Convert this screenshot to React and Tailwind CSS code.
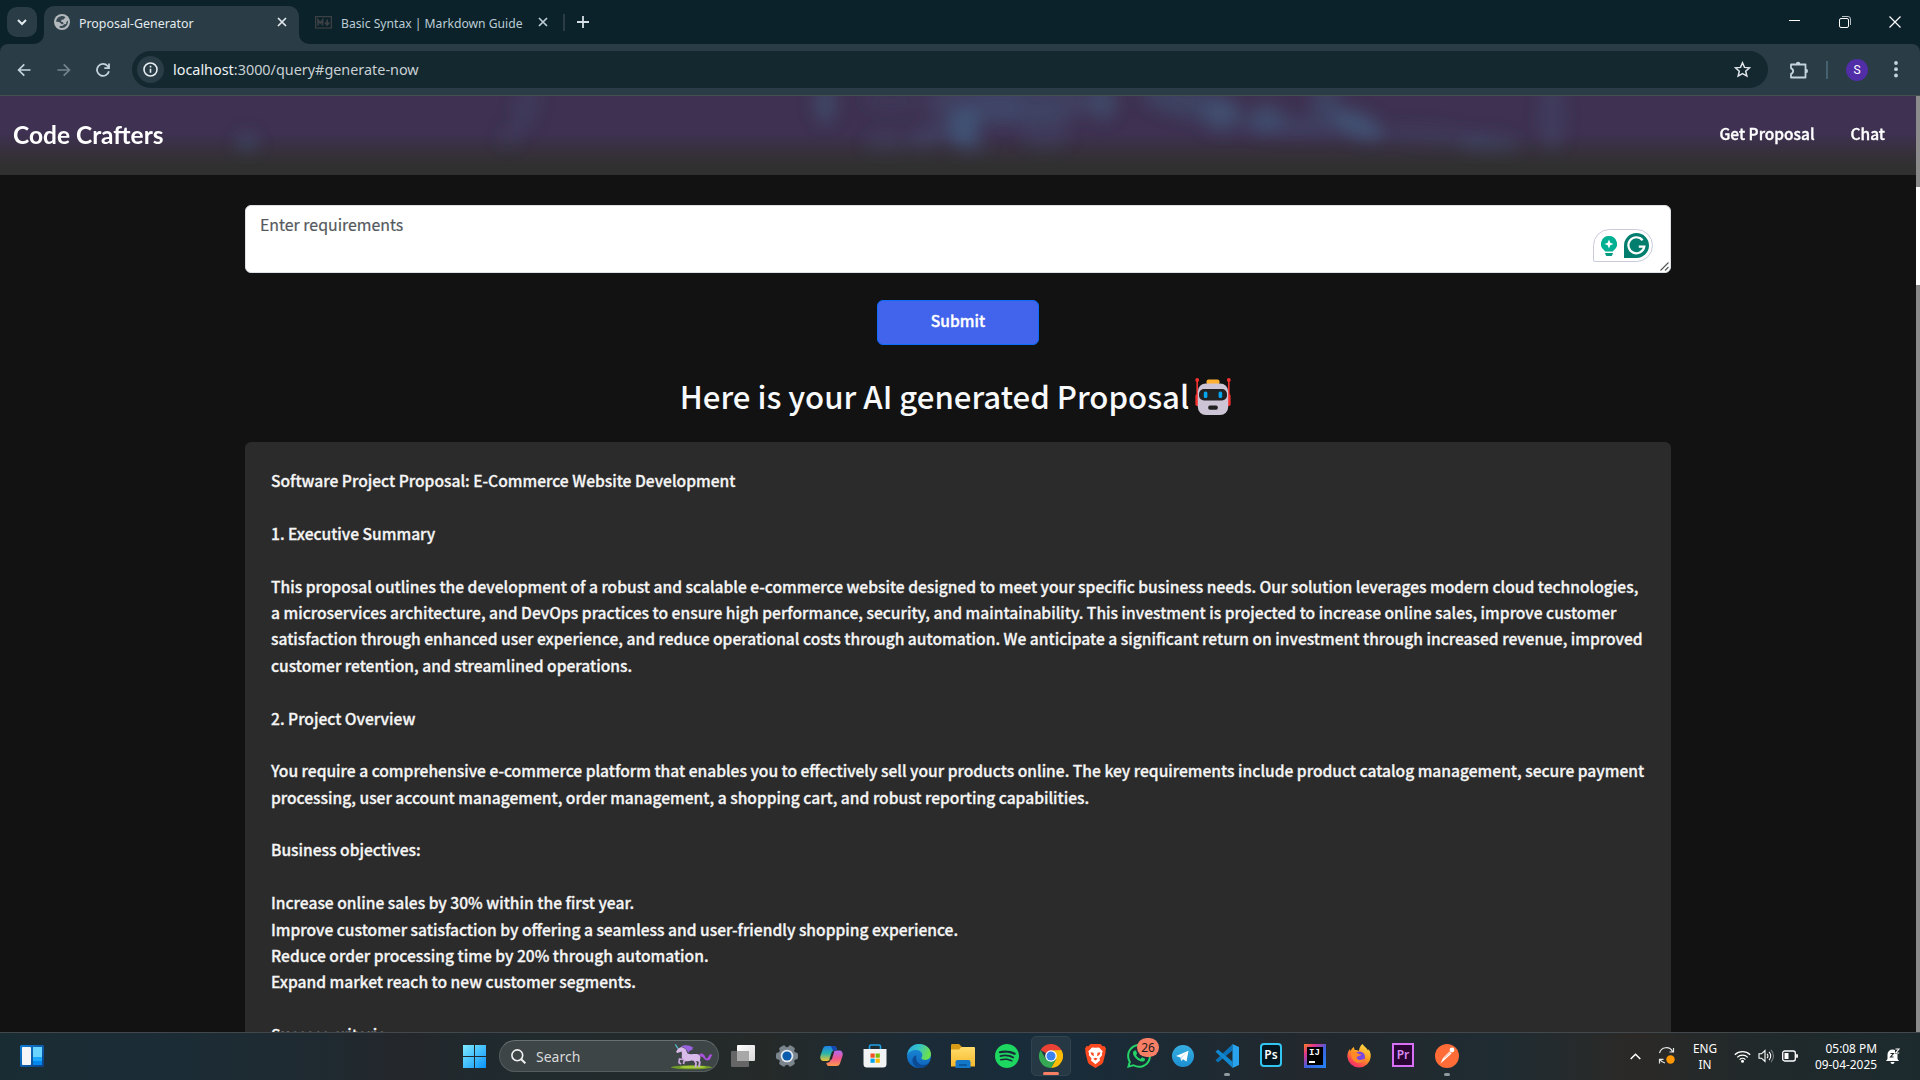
import React from "react";
import { SiSpotify, SiWhatsapp } from "react-icons/si";

const LINES = [
  "Software Project Proposal: E-Commerce Website Development",
  "",
  "1. Executive Summary",
  "",
  "This proposal outlines the development of a robust and scalable e-commerce website designed to meet your specific business needs. Our solution leverages modern cloud technologies,",
  "a microservices architecture, and DevOps practices to ensure high performance, security, and maintainability. This investment is projected to increase online sales, improve customer",
  "satisfaction through enhanced user experience, and reduce operational costs through automation. We anticipate a significant return on investment through increased revenue, improved",
  "customer retention, and streamlined operations.",
  "",
  "2. Project Overview",
  "",
  "You require a comprehensive e-commerce platform that enables you to effectively sell your products online. The key requirements include product catalog management, secure payment",
  "processing, user account management, order management, a shopping cart, and robust reporting capabilities.",
  "",
  "Business objectives:",
  "",
  "Increase online sales by 30% within the first year.",
  "Improve customer satisfaction by offering a seamless and user-friendly shopping experience.",
  "Reduce order processing time by 20% through automation.",
  "Expand market reach to new customer segments.",
  "",
  "Success criteria:",
];

function CloseX({ className }) {
  return (
    <svg viewBox="0 0 10 10" className={className} fill="none" stroke="currentColor" strokeWidth="1.7">
      <path d="M1 1l8 8M9 1L1 9" />
    </svg>
  );
}

function TabStrip() {
  return (
    <div className="flex h-11 items-start bg-[#0b222a] text-[12.4px] text-[#e3eaee]">
      <div className="ml-[7px] mt-[7px] flex h-[30px] w-[30px] items-center justify-center rounded-[10px] bg-[#2a3d46]">
        <svg width="10" height="7" viewBox="0 0 10 7" fill="none" stroke="currentColor" strokeWidth="2">
          <path d="M1 1l4 4 4-4" />
        </svg>
      </div>
      <svg className="mt-[34px] ml-[-3px] text-[#2a3d46]" width="10" height="10" viewBox="0 0 10 10">
        <path d="M10 0v10H0A10 10 0 0 0 10 0z" fill="currentColor" />
      </svg>
      <div className="mt-[6px] flex h-[38px] w-[255px] items-center rounded-t-[10px] bg-[#2a3d46] pb-[6px] pl-[10px]">
        <svg width="16" height="16" viewBox="0 0 16 16">
          <circle cx="8" cy="8" r="8" fill="#b3b9bd" />
          <path d="M7 2.200c1.600-.4 3.200 0 4.400 1L9.600 5.400 7.600 5.800 7 7.600l2 .6.600 1.800-1.800.2L5.600 8.200 2 7.500C2.200 4.800 4.400 2.600 7 2.200zM13.800 6.500c.5 2.500-.4 5.200-3 6.700-1.700 1-3.800 1-5.300.2l.2-1.400 2.900-.2 1.500-1.500 2-.3.200-2z" fill="#3a4a53" />
        </svg>
        <span className="ml-[9px] w-[198px] whitespace-nowrap pt-[4px]">Proposal-Generator</span>
        <CloseX className="h-[10px] w-[10px]" />
      </div>
      <svg className="mt-[34px] text-[#2a3d46]" width="10" height="10" viewBox="0 0 10 10">
        <path d="M0 0v10h10A10 10 0 0 1 0 0z" fill="currentColor" />
      </svg>
      <div className="flex h-11 items-center pl-[6px] text-[#bccdd6]">
        <svg width="17" height="13" viewBox="0 0 17 13" fill="none" stroke="#3d4044" strokeWidth="1.200">
          <rect x=".6" y=".6" width="15.800" height="11.400" />
          <path d="M3 9.500V4l2.300 3L7.600 4v5.500M12.200 3.500v5M10 6.500l2.200 2.500 2.200-2.500" strokeWidth="1.700" />
        </svg>
        <span className="ml-[9px] w-[197px] whitespace-nowrap pt-[4px] text-[12.150px]">Basic Syntax | Markdown Guide</span>
        <CloseX className="h-[10px] w-[10px]" />
        <div className="ml-[15px] h-[17px] w-[2px] bg-[#2a3d46]" />
        <svg className="ml-[12px]" width="12" height="12" viewBox="0 0 12 12" stroke="#d5dfe5" strokeWidth="1.800">
          <path d="M6 0v12M0 6h12" />
        </svg>
      </div>
      <div className="ml-auto flex h-11 items-center text-white">
        <div className="mb-[3px] mr-[39px] h-px w-[11px] bg-white" />
        <svg width="12" height="12" viewBox="0 0 12 12" fill="none" stroke="currentColor" className="mr-[38px]">
          <rect x=".5" y="2.500" width="9" height="9" rx="1.500" />
          <path d="M3 .5h6a2.500 2.500 0 0 1 2.500 2.500v6" opacity=".7" />
        </svg>
        <svg width="12" height="12" viewBox="0 0 12 12" stroke="currentColor" strokeWidth="1.200" className="mr-[19px]">
          <path d="M.5.5l11 11M11.500.5l-11 11" />
        </svg>
      </div>
    </div>
  );
}

function Toolbar() {
  return (
    <div className="bg-[#0b222a]">
      <div className="flex h-[52px] items-center rounded-t-[8px] border-b border-[#42504f] bg-[#2a3d46] text-[#c4d3dc]">
        <svg className="ml-[17px]" width="14" height="14" viewBox="0 0 14 14" fill="none" stroke="currentColor" strokeWidth="1.700">
          <path d="M13.500 7H2M7.300 1.300L1.600 7l5.700 5.700" />
        </svg>
        <svg className="ml-[26px] text-[#74848d]" width="14" height="14" viewBox="0 0 14 14" fill="none" stroke="currentColor" strokeWidth="1.700">
          <path d="M.5 7H12M6.700 1.300L12.400 7l-5.700 5.700" />
        </svg>
        <svg className="ml-[25px]" width="14" height="14" viewBox="0 0 14 14" fill="none" stroke="currentColor" strokeWidth="1.800">
          <path d="M12.900 8.200A6 6 0 1 1 11.600 3l.9 1.200" />
          <path d="M13 .5v4.700H8.300" />
        </svg>
        <div className="ml-[22px] flex h-[37px] w-[1636px] items-center rounded-full bg-[#142830] pl-[5px]">
          <div className="flex h-[27px] w-[27px] items-center justify-center rounded-full bg-[#2a3d46]">
            <svg width="15" height="15" viewBox="0 0 15 15" fill="none" stroke="#e6ecef" strokeWidth="1.600">
              <circle cx="7.500" cy="7.500" r="6.500" />
              <path d="M7.500 6.700v4M7.500 3.800v1.600" />
            </svg>
          </div>
          <span className="ml-[9px] whitespace-nowrap text-[14.400px] text-[#c9d0d3]">
            <span className="text-[#eef2f4]">localhost</span>:3000/query#generate-now
          </span>
          <svg className="ml-auto mr-[17px]" width="17" height="17" viewBox="0 0 17 17" fill="none" stroke="#dfe5e8" strokeWidth="1.500">
            <path d="M8.500 1.800l2 4.600 5 .45-3.800 3.300 1.150 4.900L8.500 12.500l-4.350 2.550 1.150-4.900L1.500 6.850l5-.45z" />
          </svg>
        </div>
        <svg className="ml-[21px]" width="20" height="20" viewBox="0 0 20 20" fill="none" stroke="currentColor" strokeWidth="1.800">
          <path d="M2 4.500h14.500V17.500H2v-3.600a2.900 2.900 0 0 0 0-5.600z" strokeLinejoin="round" />
          <path d="M6.900 4a2.200 2.200 0 0 1 4.400 0zM16.800 8.800a2.200 2.200 0 0 1 0 4.400z" fill="currentColor" stroke="none" />
        </svg>
        <div className="ml-[17px] h-[18px] w-[2px] bg-[#45606e]" />
        <div className="ml-[18px] flex h-[22px] w-[22px] items-center justify-center rounded-full bg-[#512da8] font-['Roboto',sans-serif] text-[12px] text-white">S</div>
        <svg className="ml-[26px]" width="4" height="17" viewBox="0 0 4 17" fill="currentColor">
          <circle cx="2" cy="2" r="1.900" />
          <circle cx="2" cy="8.200" r="1.900" />
          <circle cx="2" cy="14.500" r="1.900" />
        </svg>
      </div>
    </div>
  );
}

// Each glow: centre x, centre y, radius x, radius y, opacity, rotation
const GLOWS = [
  [247, 50, 10, 14, 0.4, 0],
  [526, 10, 12, 26, 0.22, 12],
  [510, 42, 10, 16, 0.15, 12],
  [825, 8, 11, 20, 0.5, 0],
  [885, 50, 20, 16, 0.2, 0],
  [890, 5, 30, 10, 0.15, 0],
  [1010, 6, 85, 24, 0.33, 0],
  [964, 30, 16, 20, 0.75, 12],
  [970, 54, 16, 14, 0.35, 0],
  [930, 40, 26, 14, 0.25, -30],
  [1000, 12, 26, 12, 0.3, 0],
  [1045, 34, 24, 26, 0.2, 0],
  [1103, 6, 14, 18, 0.5, 0],
  [1190, 6, 50, 16, 0.4, 10],
  [1222, 20, 20, 16, 0.5, 0],
  [1266, 22, 18, 14, 0.5, 0],
  [1300, 30, 60, 10, 0.35, 0],
  [1326, 6, 15, 18, 0.4, 0],
  [1358, 29, 26, 13, 0.7, 25],
  [1430, 40, 60, 10, 0.2, 5],
  [1490, 52, 30, 14, 0.3, 0],
  [1552, 20, 13, 40, 0.25, 0],
];

function NavBar() {
  return (
    <div className="relative h-[79px] w-full shrink-0 overflow-hidden bg-linear-to-b from-[#3e3151] from-48% via-[#36303b] via-72% to-[#303030] to-88%">
      <svg className="absolute inset-0 h-full w-full" viewBox="0 0 1916 79" preserveAspectRatio="none">
        <defs>
          <filter id="soft" filterUnits="userSpaceOnUse" x="0" y="-60" width="1916" height="200">
            <feGaussianBlur stdDeviation="8" />
          </filter>
          <linearGradient id="fade" x1="0" y1="0" x2="0" y2="1">
            <stop offset=".55" stopColor="#fff" />
            <stop offset=".9" stopColor="#000" />
          </linearGradient>
          <mask id="fadeMask">
            <rect width="1916" height="79" fill="url(#fade)" />
          </mask>
        </defs>
        <g mask="url(#fadeMask)">
          <g filter="url(#soft)">
            {GLOWS.map(([x, y, rx, ry, o, r], i) => (
              <ellipse key={i} cx={x} cy={y} rx={rx} ry={ry} fill="#425c7e" opacity={o} transform={`rotate(${r} ${x} ${y})`} />
            ))}
          </g>
        </g>
      </svg>
      <div className="relative flex h-full items-center pl-[13px] pr-[31px] text-white">
        <span className="font-['Lato',sans-serif] text-[24.500px] font-bold leading-none">Code Crafters</span>
        <span className="mb-[3px] ml-auto text-[15.500px] font-medium leading-none [-webkit-text-stroke:0.350px_white]">Get Proposal</span>
        <span className="mb-[3px] ml-[36px] text-[15.500px] font-medium leading-none [-webkit-text-stroke:0.350px_white]">Chat</span>
      </div>
    </div>
  );
}

function Robot() {
  return (
    <svg width="36" height="38" viewBox="0 0 36 38">
      <path d="M2.200 2v24M33.800 2v24" stroke="#f8312f" strokeWidth="1.600" />
      <circle cx="2.200" cy="2" r="1.900" fill="#f8312f" />
      <circle cx="33.800" cy="2" r="1.900" fill="#f8312f" />
      <rect x="0.400" y="16" width="4" height="12" rx="1.800" fill="#f8312f" />
      <rect x="31.600" y="16" width="4" height="12" rx="1.800" fill="#f8312f" />
      <rect x="11.500" y="1.500" width="13" height="5" rx="2" fill="#ffb02e" />
      <rect x="2.800" y="5.500" width="30.400" height="31.500" rx="8" fill="#cdc4d6" />
      <rect x="4" y="11" width="28" height="11.500" rx="5" fill="#212121" />
      <rect x="8.800" y="13.500" width="3.600" height="6.500" rx="1.600" fill="#00a6ed" />
      <rect x="23.600" y="13.500" width="3.600" height="6.500" rx="1.600" fill="#00a6ed" />
      <rect x="13.200" y="27.500" width="9.600" height="4.300" rx="1.800" fill="#212121" />
    </svg>
  );
}

function Page() {
  return (
    <div className="flex h-[936px] overflow-hidden bg-[#121212] font-['Noto_Sans_CJK_JP',sans-serif]">
      <div className="flex w-[1916px] flex-col items-center">
        <NavBar />
        <div className="mt-[30px] flex h-[68px] w-[1426px] shrink-0 justify-between rounded-[6px] border border-[#dee2e6] bg-white">
          <span className="ml-[14px] mt-[6px] text-[15.900px] leading-[26px] text-[#55595d] [-webkit-text-stroke:0.200px_#55595d]">Enter requirements</span>
          <div className="flex items-end">
            <div className="mb-[10px] flex h-[33px] w-[60px] items-center gap-[7px] rounded-[17px] rounded-bl-[2px] border border-[#c9cbdc] bg-white pl-[7px]">
              <svg width="16" height="20" viewBox="0 0 16 20">
                <path d="M8 0a8 8 0 0 1 4.400 14.700L11.800 15.500H4.200L3.600 14.700A8 8 0 0 1 8 0z" fill="#00b093" />
                <path d="M4 17h8l-.8 2.200a1 1 0 0 1-1 .8H5.800a1 1 0 0 1-1-.8z" fill="#009a80" />
                <path d="M8 3.500l1.300 3.200L12.500 8 9.300 9.300 8 12.500 6.700 9.300 3.500 8l3.200-1.300z" fill="#fff" />
              </svg>
              <svg width="25" height="25" viewBox="0 0 25 25">
                <path d="M12.500 0A12.500 12.500 0 1 1 12.500 25H0V12.500A12.500 12.500 0 0 1 12.500 0z" fill="#027e6f" />
                <path d="M18.600 7.200A8 8 0 1 0 20.300 13.600H14.800M20.400 13.600l-1.800 4" fill="none" stroke="#fff" strokeWidth="2.200" />
              </svg>
            </div>
            <svg className="ml-[7px] mr-px mb-px" width="9" height="9" viewBox="0 0 9 9" stroke="#555" strokeWidth="1.100">
              <path d="M.5 8.500l8-8M5 8.500l3.500-3.500" />
            </svg>
          </div>
        </div>
        <div className="mt-[27px] flex h-[45px] w-[162px] shrink-0 items-center justify-center rounded-[6px] border border-[#0d6efd] bg-[#4263eb] pb-[3px] text-[15.600px] font-medium text-white [-webkit-text-stroke:0.350px_white]">
          Submit
        </div>
        <div className="mt-[29px] flex h-[45px] shrink-0 items-center pr-[5px] text-[31.150px] font-medium leading-none text-[#f8f9fa]">
          <span className="mb-[2px] mr-[6px] whitespace-nowrap">Here is your AI generated Proposal</span>
          <Robot />
        </div>
        <div className="mt-[23px] h-[700px] w-[1426px] shrink-0 rounded-[6px] bg-[#2b2b2b] px-[26px] pt-[25px] text-[15.600px] font-medium text-[#f5f5f5] [-webkit-text-stroke:0.300px_#f5f5f5]">
          {LINES.map((l, i) => (
            <div key={i} className="h-[26.400px] whitespace-nowrap leading-[26.400px]">{l}</div>
          ))}
        </div>
      </div>
      <div className="w-[4px] bg-[#8b8b8b] pt-[91px]">
        <div className="h-[98px] bg-white" />
      </div>
    </div>
  );
}

const Cell = ({ children, active, running }) => (
  <div className="flex w-11 justify-center">
    <div className={active ? "relative flex h-10 w-10 items-center justify-center rounded-[5px] border border-[#324450] bg-[#263843]" : "relative flex h-10 w-10 items-center justify-center"}>
      {children}
      {active && <div className="absolute bottom-0 h-[3px] w-4 rounded-full bg-[#f77f66]" />}
      {running && <div className="absolute bottom-0 h-[3px] w-[6px] rounded-full bg-[#8f999e]" />}
    </div>
  </div>
);

function Unicorn() {
  return (
    <svg width="42" height="26" viewBox="0 0 42 26">
      <ellipse cx="20.500" cy="23.300" rx="20.500" ry="2" fill="#6f9a28" />
      <ellipse cx="22" cy="23" rx="13" ry="1.300" fill="#a4c93c" />
      <path d="M7 4.500L4.300.500" stroke="#52c7d8" strokeWidth="1.300" />
      <path d="M28 11c2.500-3 5-1 6 1.500s2.500 2.500 3.500 0 2.500-3 4-1.500c-1.800 1-1.500 5.500-5 5.500-4 0-4-4.500-6.500-3.500z" fill="#a950dc" />
      <path d="M12 15.500l-3.500-.5-.5 3.500 2 1.500M17 16l-4 1-.5 3" fill="none" stroke="#c9a5dc" strokeWidth="1.700" />
      <path d="M26.500 15l2.300 3-.8 5M23 15.500l2 3.500-.5 4.500" fill="none" stroke="#cda9de" strokeWidth="1.900" />
      <path d="M7 4.500l3.500-1.500 4 2 2 4.500c3 1.200 6 .3 9 .5 4 .3 4.700 4 3 7-3 1-6-.8-9-.3-3.500 1-7 .3-8.500-2.700-.7-2 .5-4-.5-6.500L6.500 9 5 8z" fill="#d9bbea" />
      <path d="M10 2.500c4-2.500 10-1 12.500 1.500-1.200 0-1.700.8-.7 1.800-2.300 0-3 1-4.800 3.200-.6-3-3-5.500-7-6.500z" fill="#9a63e0" />
    </svg>
  );
}

function Taskbar() {
  return (
    <div className="flex h-12 items-center border-t border-[#42484b] font-['Noto_Sans',sans-serif] text-white">
      <div className="flex h-full w-full items-center bg-[linear-gradient(90deg,#1a2c33_0%,#1b2c36_8%,#1f2a30_17%,#24272c_21%,#202a2e_25%,#252a29_40%,#1b2b37_48%,#182c3a_55%,#22282d_68%,#1f2c32_78%,#2b2927_85%,#20292b_92%,#1c2a2e_100%)]">
        <svg className="ml-5 mb-px" width="24" height="22" viewBox="0 0 24 22">
          <defs>
            <linearGradient id="wd" x1="0" y1="0" x2="1" y2="1"><stop stopColor="#0d7dd6" /><stop offset="1" stopColor="#0c3f82" /></linearGradient>
          </defs>
          <rect width="24" height="22" rx="1.500" fill="url(#wd)" />
          <rect x="2" y="2" width="9" height="18" rx=".8" fill="#f5f5f7" />
          <rect x="13" y="2" width="9" height="10" fill="#68d4ff" />
          <rect x="13" y="12" width="9" height="4" fill="#1aa7ff" />
          <rect x="13" y="16" width="9" height="4" fill="#0586ee" />
        </svg>
        <svg className="ml-[419px]" width="23" height="23" viewBox="0 0 23 23">
          <defs>
            <linearGradient id="win" gradientUnits="userSpaceOnUse" x1="0" y1="0" x2="23" y2="23"><stop stopColor="#7eeaff" /><stop offset="1" stopColor="#0a93fb" /></linearGradient>
          </defs>
          <path d="M0 0h11v11H0zM12 0h11v11H12zM0 12h11v11H0zM12 12h11v11H12z" fill="url(#win)" />
        </svg>
        <div className="ml-[13px] mb-px flex h-8 w-[220px] items-center rounded-full border border-[#555d5f] border-t-[#6a7173] bg-[#3e4547] pl-[11px] pr-[5px]">
          <svg width="15" height="15" viewBox="0 0 15 15" fill="none" stroke="#f0f0f0" strokeWidth="1.600">
            <circle cx="6.300" cy="6.300" r="5.400" />
            <path d="M10.200 10.200L14.300 14.300" strokeWidth="2" />
          </svg>
          <span className="ml-[10px] mt-px text-[14px] leading-none text-[#d8dadb]">Search</span>
          <span className="ml-auto mt-px"><Unicorn /></span>
        </div>
        <div className="ml-[2px] mb-px flex">
          <Cell>
            <svg width="24" height="22" viewBox="0 0 24 22"><defs><linearGradient id="tv" x1="0" y1="0" x2="1" y2="1"><stop stopColor="#fff" /><stop offset="1" stopColor="#d8d8d8" /></linearGradient></defs><rect x="0" y="6" width="18" height="16" rx="1" fill="#666" /><rect x="6" y="0" width="18" height="16" rx="1" fill="url(#tv)" /><rect x="6" y="6" width="12" height="10" fill="#a8a8a8" /></svg>
          </Cell>
          <Cell>
            <svg width="24" height="24" viewBox="0 0 24 24"><g fill="#7b858e"><rect x="8.500" y="1" width="7" height="22" rx="2" transform="rotate(30 12 12)" /><rect x="8.500" y="1" width="7" height="22" rx="2" transform="rotate(90 12 12)" /><rect x="8.500" y="1" width="7" height="22" rx="2" transform="rotate(150 12 12)" /><circle cx="12" cy="12" r="9" /></g><circle cx="12" cy="12" r="6.300" fill="#e6eaee" /><circle cx="12" cy="12" r="4.600" fill="#0b5cad" /></svg>
          </Cell>
          <Cell>
            <svg width="23" height="22" viewBox="0 0 23 22"><defs><linearGradient id="c1" x1="0" y1="0" x2="0" y2="1"><stop stopColor="#1e7fe8" /><stop offset=".5" stopColor="#2bb5a8" /><stop offset="1" stopColor="#f4c430" /></linearGradient><linearGradient id="c2" x1="0" y1="0" x2="0" y2="1"><stop stopColor="#b06bf5" /><stop offset=".5" stopColor="#f0568c" /><stop offset="1" stopColor="#ff9a4d" /></linearGradient></defs><path d="M6.500 1h7.500c2 0 2.300 1.500 2.800 3L15 4.500c-1.500 0-2 1-2.500 2.500L10.500 13c-.7 2-1.500 3-3.500 3H3.500C.5 16-.2 13 .5 10.500L3 3.500C3.700 1.800 4.700 1 6.500 1z" fill="url(#c1)" /><path d="M16.500 21H9c-2 0-2.300-1.500-2.800-3L8 17.500c1.500 0 2-1 2.500-2.500L12.500 9c.7-2 1.500-3.500 3.500-3.500h3.500c3 0 3.700 3 3 5.500L20 18.500c-.7 1.700-1.700 2.500-3.500 2.500z" fill="url(#c2)" /><path d="M9.300 14.500L12 6.500h2.300l-2.500 8z" fill="#22282a" /><path d="M11 1h3c2 0 2.300 1.500 2.800 4L13 5.500z" fill="#1647b5" /></svg>
          </Cell>
          <Cell>
            <svg width="24" height="24" viewBox="0 0 24 24"><path d="M6.500 5V2.500a1.500 1.500 0 0 1 1.500-1.500h8A1.500 1.500 0 0 1 17.500 2.500V5" fill="none" stroke="#1ea0e6" strokeWidth="1.600" /><path d="M.5 5h23v15a3.500 3.500 0 0 1-3.500 3.500H4A3.500 3.500 0 0 1 .5 20z" fill="#f2f3f4" /><path d="M7.500 9.500h4.200v4.200H7.500z" fill="#f25022" /><path d="M12.600 9.500h4.200v4.200h-4.200z" fill="#7fba00" /><path d="M7.500 14.600h4.200v4.200H7.500z" fill="#00a4ef" /><path d="M12.600 14.600h4.200v4.200h-4.200z" fill="#ffb900" /></svg>
          </Cell>
          <Cell>
            <svg width="24" height="24" viewBox="0 0 24 24"><defs><linearGradient id="e1" x1="0" y1="0" x2="1" y2=".3"><stop stopColor="#2aa8e0" /><stop offset=".5" stopColor="#35c1c9" /><stop offset="1" stopColor="#6be04e" /></linearGradient><linearGradient id="e2" x1="0" y1="0" x2="0" y2="1"><stop stopColor="#1b8fdc" /><stop offset="1" stopColor="#0f62b8" /></linearGradient></defs><circle cx="12" cy="12" r="12" fill="url(#e2)" /><path d="M.2 11C1 4.500 6 0 12 0c7 0 12 4.800 12 10.300 0 3.500-2.600 5.700-5.700 5.700-2.600 0-4-1-4-1.900 0-.6 1-1 1-3C15.300 8.300 12.500 6 9 6 5 6 1.500 8 .2 11z" fill="url(#e1)" /><path d="M9.500 11.500c-1.500 4 1.500 9.500 6.500 9.500 2.500 0 5-1.300 6.500-3-2 4-6 6-10 6-4.500-1-7.500-4.500-7-8.500.3-2.300 2-4 4-4z" fill="#0c4a94" /></svg>
          </Cell>
          <Cell>
            <svg width="24" height="24" viewBox="0 0 24 24"><defs><linearGradient id="fx" x1="0" y1="0" x2="0" y2="1"><stop stopColor="#ffdc6b" /><stop offset="1" stopColor="#f7b92c" /></linearGradient></defs><path d="M0 1.500C0 .7.500 0 1.300 0H8l2.500 2.500V7H0z" fill="#d99a16" /><path d="M0 5.500h8L10.500 3H23a1 1 0 0 1 1 1V22.500H0z" fill="url(#fx)" /><path d="M4.500 24v-6a2 2 0 0 1 2-2h11a2 2 0 0 1 2 2v6z" fill="#1377c9" /><path d="M8 20h8v2H8z" fill="#0b5a9f" /></svg>
          </Cell>
          <Cell><SiSpotify className="h-6 w-6 text-[#1ed760]" /></Cell>
          <Cell active>
            <svg width="24" height="24" viewBox="0 0 24 24"><path d="M1.600 6A12 12 0 0 1 22.400 6L12 12z" fill="#ea4335" /><path d="M22.400 6A12 12 0 0 1 12 24l5.200-9L12 6.500z" fill="#fbbc05" /><path d="M1.600 6A12 12 0 0 0 12 24l5.200-9H6.800z" fill="#34a853" /><circle cx="12" cy="12" r="5.800" fill="#fff" /><circle cx="12" cy="12" r="4.500" fill="#3b82f0" /></svg>
          </Cell>
          <Cell>
            <svg width="21" height="24" viewBox="0 0 21 24">
              <path d="M5.500 0h10l2 2.200 1.800-.2L21 4.500l-.6 2.500.3 1-2.500 10c-.3 1-.8 1.600-1.600 2.200L10.500 24 4.400 20.200c-.8-.6-1.300-1.200-1.600-2.200L.3 8l.3-1L0 4.500 1.700 2l1.800.2z" fill="#fb4a1f" />
              <path d="M10.500 3.800L14 3.500l3.700 3.800-.8 2.200.3 1.500-2.700 3.400.5 2-4.500 3.800-4.500-3.800.5-2L3.800 11l.3-1.500-.8-2.200L7 3.500z" fill="#fff" />
              <path d="M5.500 8.200l3 .6.400 3.400-2.300-1.300zM15.500 8.200l-3 .6-.4 3.400 2.300-1.300zM8.300 14.700l2.200-.9 2.200.9-2.200 1.700z" fill="#fb4a1f" />
            </svg>
          </Cell>
          <Cell>
            <SiWhatsapp className="h-6 w-6 text-[#25d366]" />
            <div className="absolute left-[18px] top-[2px] flex h-[19px] w-[22px] items-center justify-center rounded-full bg-[#f77f66] text-[12px] leading-none text-[#1c1c1c]">26</div>
          </Cell>
          <Cell>
            <svg width="22" height="24" viewBox="0 0 22 24"><defs><linearGradient id="tg" x1="0" y1="0" x2="0" y2="1"><stop stopColor="#37aee2" /><stop offset="1" stopColor="#1c8fd0" /></linearGradient></defs><circle cx="11" cy="12" r="11" fill="url(#tg)" /><path d="M4 12L16.500 6.800 14.500 17.500 11 15.200 9.200 17 8.500 13.500z" fill="#fff" /><path d="M8.500 13.500L14.500 8.800 9.800 14 9.200 17z" fill="#c8daea" /></svg>
          </Cell>
          <Cell running>
            <svg width="24" height="24" viewBox="0 0 24 24"><path d="M17.500 6.500L3 18.500 0.500 16.300 17.500 .3z" fill="#0a72b8" /><path d="M17.500 17.500L3 5.500 .5 7.700l17 16z" fill="#1187cf" /><path d="M17.500 0L24 3v18l-6.500 3z" fill="#2aa3ee" /></svg>
          </Cell>
          <Cell>
            <div className="mb-[2px] flex h-6 w-[22px] items-center justify-center rounded-[4px] border-2 border-[#31c5f0] bg-[#04161f] text-[12px] font-semibold leading-none text-white">Ps</div>
          </Cell>
          <Cell>
            <div className="flex h-6 w-[22px] items-center justify-center bg-[linear-gradient(135deg,#fc801d_0%,#e0348c_25%,#3b62e0_55%,#2186f5_100%)]">
              <div className="flex h-[18px] w-[16px] flex-col justify-between bg-black p-[2px] font-['Liberation_Mono',monospace] text-[9px] font-bold leading-none text-white">
                IJ
                <div className="h-[2px] w-[6px] bg-white" />
              </div>
            </div>
          </Cell>
          <Cell>
            <svg width="24" height="24" viewBox="0 0 24 24"><defs><linearGradient id="ff" x1=".8" y1="0" x2=".2" y2="1"><stop stopColor="#ffe14a" /><stop offset=".45" stopColor="#ff9a1f" /><stop offset=".75" stopColor="#ff4f4b" /><stop offset="1" stopColor="#e8217c" /></linearGradient></defs><path d="M15.500 0c1.500 2.500 4.500 3.800 5.500 6.500.5-.2.500-1 .3-1.500C23 7 24 9.500 23.700 13A11.700 11.700 0 0 1 .4 13C.2 9.500 1.400 6.500 3 5c0 1 .2 1.500.5 2C4.500 4.500 6 3.500 7 3c0 1.200.5 2.300 1 3 1.500 0 3 .2 4 1 0-2.500 1.500-6 3.500-7z" fill="url(#ff)" /><circle cx="12.500" cy="13" r="5.500" fill="#7a48e0" /><path d="M4 9c2-1.500 5-1 7 .5 1 .7 2 1 3.500.8-1 1.700-3 1.700-4 2.200-1.500.8-1 3 1.500 3.500 2.500.4 4-1.500 5.500-1-1 3.500-5 4.500-8 3.500C6 17 4 13.500 4 9z" fill="#ff8a26" /></svg>
          </Cell>
          <Cell>
            <div className="mb-[2px] flex h-6 w-[22px] items-center justify-center border-2 border-[#d770f5] bg-[#2a0634] text-[12px] font-semibold leading-none text-[#d98af5]">Pr</div>
          </Cell>
          <Cell running>
            <svg width="24" height="24" viewBox="0 0 24 24"><circle cx="12" cy="12" r="12" fill="#ff6c37" /><circle cx="17" cy="6" r="2.400" fill="#fff" /><path d="M14.500 7.500l2 2L9.500 16l-4 3.500L8 14z" fill="#fff" /><path d="M9 14.500l6-6" stroke="#ff6c37" strokeWidth=".6" /></svg>
          </Cell>
        </div>
        <div className="mb-px ml-auto flex items-center">
          <svg className="mr-[17px]" width="11" height="7" viewBox="0 0 11 7" fill="none" stroke="#fff" strokeWidth="1.500"><path d="M.7 6L5.500 1.200 10.300 6" /></svg>
          <svg className="mr-[17px]" width="18" height="18" viewBox="0 0 18 18" fill="none" stroke="#e6e6e6" strokeWidth="1.200"><path d="M1.500 6A7 7 0 0 1 14.500 4.500M15.500 1v4h-4M7 16A7 7 0 0 1 2 12.500M1.500 16.500v-4.200h4" /><circle cx="12.500" cy="12.500" r="4.200" fill="#ff9800" stroke="none" /></svg>
          <div className="mr-[17px] w-[24px] text-center text-[11.800px] leading-[16px]">ENG<br />IN</div>
          <svg className="mr-[7px]" width="17" height="13" viewBox="0 0 17 13" fill="none" stroke="#fff" strokeWidth="1.200"><path d="M.8 4.800a11 11 0 0 1 15.400 0M3.200 7.300a7.500 7.500 0 0 1 10.600 0M5.600 9.600a4.200 4.200 0 0 1 5.800 0" /><circle cx="8.500" cy="11.200" r="1.500" fill="#fff" stroke="none" /></svg>
          <svg className="mr-[7px]" width="17" height="14" viewBox="0 0 17 14" fill="none" stroke="#fff" strokeWidth="1.100"><path d="M1 4.800h2.500L7 1.500v11L3.500 9.200H1z" /><path d="M9 4.800a3 3 0 0 1 0 4.400M11 2.800a6 6 0 0 1 0 8.400" /><path d="M13 1a8.500 8.500 0 0 1 0 12" opacity=".4" /></svg>
          <svg className="mr-[17px]" width="16" height="12" viewBox="0 0 16 12" fill="none" stroke="#fff" strokeWidth="1.300"><rect x=".7" y="1" width="12.600" height="10" rx="2" /><path d="M2.500 3h4v6h-4z" fill="#fff" stroke="none" /><path d="M15 4.200v3.600" strokeWidth="1.800" /></svg>
          <div className="mr-[9px] flex w-[62px] flex-col items-end whitespace-nowrap text-[11.900px] leading-[16px]"><span>05:08 PM</span><span>09-04-2025</span></div>
          <svg className="mr-[20px]" width="14" height="16" viewBox="0 0 14 16"><path d="M1.500 11V6.500a5 5 0 0 1 10 0V11l1.500 2H0z" fill="#fff" /><path d="M4.500 14h4a2 2 0 0 1-4 0z" fill="#fff" /><path d="M4.500 5.500h3l-3 3.500h3" stroke="#20292b" strokeWidth="1.100" fill="none" /><path d="M9 0h5v6H9z" fill="#20292b" /><path d="M9.500 1h3.500L9.700 5h3.500" stroke="#fff" strokeWidth="1.100" fill="none" /></svg>
        </div>
      </div>
    </div>
  );
}

export default function App() {
  return (
    <div className="h-[1080px] w-[1920px] overflow-hidden bg-[#121212] font-['Noto_Sans',sans-serif]">
      <TabStrip />
      <Toolbar />
      <Page />
      <Taskbar />
    </div>
  );
}
